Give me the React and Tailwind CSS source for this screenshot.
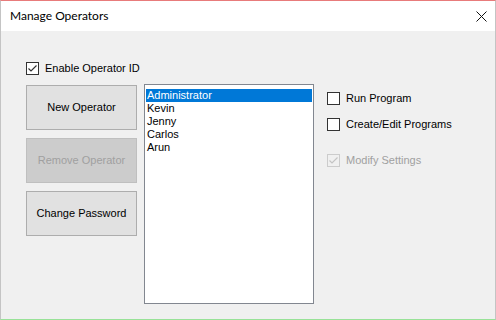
import React from "react";

const sans = { fontFamily: '"Liberation Sans", Arial, sans-serif' };

function Check({ disabled }) {
  return (
    <svg width="11" height="11" viewBox="0 0 11 11" className="block">
      <polyline
        points="1.5,5.5 4,8 9.5,2.5"
        fill="none"
        stroke={disabled ? "#c4c4c4" : "#333333"}
        strokeWidth="1.2"
      />
    </svg>
  );
}

function CheckBox({ label, checked, disabled }) {
  return (
    <div className="flex items-center h-[13px] gap-[6px]">
      <div
        className={`w-[13px] h-[13px] border flex items-center justify-center ${
          disabled ? "border-[#cccccc] bg-[#f0f0f0]" : "border-[#333333] bg-white"
        }`}
      >
        {checked && <Check disabled={disabled} />}
      </div>
      <span
        className={`text-[11px] leading-[13px] ${disabled ? "text-[#a0a0a0]" : "text-black"}`}
      >
        {label}
      </span>
    </div>
  );
}

function Button({ children, disabled }) {
  return (
    <div
      className={`h-[45px] w-[111px] border flex items-center justify-center text-[11px] ${
        disabled
          ? "bg-[#cccccc] border-[#bfbfbf] text-[#a0a0a0]"
          : "bg-[#e1e1e1] border-[#adadad] text-black"
      }`}
    >
      {children}
    </div>
  );
}

const operators = ["Administrator", "Kevin", "Jenny", "Carlos", "Arun"];

export default function App() {
  return (
    <div
      className="relative w-[496px] h-[320px] bg-[#f0f0f0] border border-[#c4c4c4] border-t-[#e87b7b] border-b-[#98e298] overflow-hidden flex flex-col"
      style={sans}
    >
      {/* desktop colours bleeding through the window edge */}
      <div className="absolute -left-px top-[143px] w-px h-[60px] bg-[#e87b7b]" />
      <div className="absolute -left-px top-[230px] w-px h-[10px] bg-[#98e298]" />
      <div className="absolute -left-px top-[240px] w-px h-[47px] bg-[#f2e81a]" />
      <div className="absolute -left-px top-[287px] w-px h-[33px] bg-[#98e298]" />
      <div className="absolute -left-px -top-px w-px h-[8px] bg-[#e87b7b]" />
      <div className="absolute -right-px top-[143px] w-px h-[60px] bg-[#e87b7b]" />
      <div className="absolute -right-px top-[230px] w-px h-[10px] bg-[#98e298]" />
      <div className="absolute -right-px top-[240px] w-px h-[47px] bg-[#f2e81a]" />
      <div className="absolute -right-px top-[287px] w-px h-[33px] bg-[#98e298]" />
      <div className="absolute -right-px -top-px w-px h-[8px] bg-[#e87b7b]" />

      <div className="h-[30px] bg-white flex items-center justify-between pl-[9px] pr-[8px] shrink-0">
        <span
          className="text-[12px] text-black"
          style={{ fontFamily: 'Lato, "Noto Sans", sans-serif' }}
        >
          Manage Operators
        </span>
        <svg width="11" height="11" viewBox="0 0 11 11">
          <path d="M0.5 0.5 L10.5 10.5 M10.5 0.5 L0.5 10.5" stroke="#111" strokeWidth="1" />
        </svg>
      </div>

      <div className="flex flex-col pl-[25px] pt-[31px]">
        <CheckBox label="Enable Operator ID" checked />

        <div className="flex items-start mt-[10px]">
          <div className="flex flex-col gap-[8px]">
            <Button>New Operator</Button>
            <Button disabled>Remove Operator</Button>
            <Button>Change Password</Button>
          </div>

          <div className="ml-[7px] -mt-px w-[170px] h-[220px] bg-white border border-[#828790] pt-[4px] px-px">
            {operators.map((name, i) => (
              <div
                key={name}
                className={`h-[13px] leading-[13px] text-[11px] pl-[1px] ${
                  i === 0 ? "bg-[#0078d7] text-white" : "text-black"
                }`}
              >
                {name}
              </div>
            ))}
          </div>

          <div className="ml-[13px] pt-[7px] flex flex-col">
            <CheckBox label="Run Program" />
            <div className="h-[13px]" />
            <CheckBox label="Create/Edit Programs" />
            <div className="h-[23px]" />
            <CheckBox label="Modify Settings" checked disabled />
          </div>
        </div>
      </div>
    </div>
  );
}
